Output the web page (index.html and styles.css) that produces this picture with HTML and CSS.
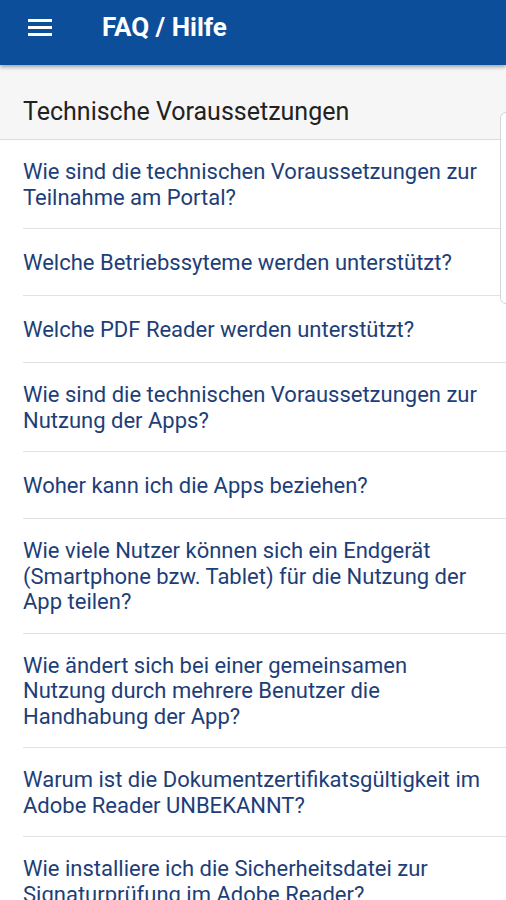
FILE: index.html
```html
<!DOCTYPE html>
<html lang="de">
<head>
<meta charset="utf-8">
<title>FAQ / Hilfe</title>
<link rel="stylesheet" href="styles.css">
</head>
<body>
<header class="appbar">
  <svg class="menu" width="24" height="17" viewBox="0 0 24 17" aria-hidden="true">
    <rect x="0" y="0" width="24" height="3" fill="#fff"/>
    <rect x="0" y="7" width="24" height="3" fill="#fff"/>
    <rect x="0" y="14" width="24" height="3" fill="#fff"/>
  </svg>
  <h1 class="title">FAQ / Hilfe</h1>
</header>
<main class="content">
  <div class="section">Technische Voraussetzungen</div>
  <ul class="list">
    <li class="item">Wie sind die technischen Voraussetzungen zur Teilnahme am Portal?</li>
    <li class="item">Welche Betriebssyteme werden unterstützt?</li>
    <li class="item">Welche PDF Reader werden unterstützt?</li>
    <li class="item">Wie sind die technischen Voraussetzungen zur Nutzung der Apps?</li>
    <li class="item">Woher kann ich die Apps beziehen?</li>
    <li class="item">Wie viele Nutzer können sich ein Endgerät (Smartphone bzw. Tablet) für die Nutzung der App teilen?</li>
    <li class="item">Wie ändert sich bei einer gemeinsamen Nutzung durch mehrere Benutzer die Handhabung der App?</li>
    <li class="item">Warum ist die Dokumentzertifikatsgültigkeit im Adobe Reader UNBEKANNT?</li>
    <li class="item">Wie installiere ich die Sicherheitsdatei zur Signaturprüfung im Adobe Reader?</li>
  </ul>
  <div class="scroll-thumb"></div>
</main>
</body>
</html>
```
FILE: styles.css
```css
html, body {
  margin: 0;
  padding: 0;
  background: #fff;
  font-family: Roboto, "Noto Sans", "Liberation Sans", sans-serif;
  overflow: hidden;
}
.appbar {
  height: 65px;
  background: #0d4e9b;
  display: flex;
  align-items: center;
  padding-left: 28px;
  padding-bottom: 11px;
  box-sizing: border-box;
  box-shadow: 0 2px 4px rgba(0,0,0,0.35);
  position: relative;
  z-index: 2;
}
.menu {
  display: block;
}
.title {
  margin: 0 0 0 50px;
  color: #fff;
  font-size: 26px;
  font-weight: 700;
  line-height: 30px;
}
.content {
  position: relative;
}
.section {
  background: #f6f6f6;
  border-bottom: 1px solid #dcdcdc;
  height: 75px;
  box-sizing: border-box;
  padding: 32px 0 0 23px;
  font-size: 25px;
  color: #222;
  line-height: 30px;
}
.list {
  list-style: none;
  margin: 0;
  padding: 0 0 0 23px;
}
.item {
  padding: 19px 22px 18px 0;
  border-bottom: 1px solid #e2e2e2;
  min-height: 29px;
  font-size: 22px;
  line-height: 25.5px;
  color: #1d3e78;
  display: flex;
  align-items: center;
}
.scroll-thumb {
  position: absolute;
  right: -8px;
  top: 47px;
  width: 12px;
  height: 190px;
  border: 1px solid #d6d6d6;
  border-radius: 6px;
  background: #fff;
}
```
